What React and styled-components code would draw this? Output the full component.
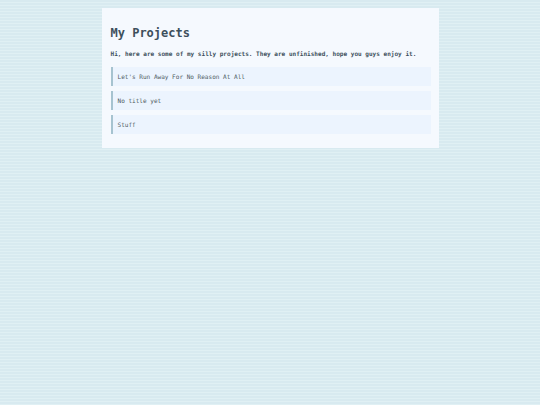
import React from 'react';
import styled, { createGlobalStyle } from 'styled-components';

const GlobalStyle = createGlobalStyle`
  html, body {
    margin: 0;
    padding: 0;
    min-height: 100%;
  }
  body {
    font-family: 'DejaVu Sans Mono', 'Liberation Mono', monospace;
    background-color: #daecf1;
    background-image: repeating-linear-gradient(
      to bottom,
      #d8eaf0 0px,
      #d8eaf0 2px,
      #e0f0f4 2px,
      #e0f0f4 3px
    );
    min-height: 405px;
  }
`;

const Page = styled.div`
  padding-top: 8px;
`;

const Card = styled.main`
  width: 337px;
  margin: 0 auto;
  box-sizing: border-box;
  background: #f5f9fe;
  padding: 17px 8px 14px 9px;
`;

const Title = styled.h1`
  margin: 0 0 8px;
  font-size: 12px;
  line-height: 16px;
  font-weight: bold;
  color: #3d505c;
`;

const Intro = styled.p`
  margin: 0 0 8px;
  font-size: 6.06px;
  line-height: 10px;
  font-weight: bold;
  color: #3d505c;
`;

const List = styled.ul`
  list-style: none;
  margin: 0;
  padding: 0;
  display: flex;
  flex-direction: column;
  gap: 5px;
`;

const Item = styled.li`
  height: 19px;
  display: flex;
  align-items: center;
  box-sizing: border-box;
  padding-left: 5px;
  background: #ecf4fe;
  border-left: 2px solid #a6c3d0;
  font-size: 6.06px;
  color: #505c64;
`;

const projects = ["Let's Run Away For No Reason At All", 'No title yet', 'Stuff'];

const App = () => {
  return (
    <>
      <GlobalStyle />
      <Page>
        <Card>
          <Title>My Projects</Title>
          <Intro>
            Hi, here are some of my silly projects. They are unfinished, hope you guys enjoy it.
          </Intro>
          <List>
            {projects.map((p) => (
              <Item key={p}>{p}</Item>
            ))}
          </List>
        </Card>
      </Page>
    </>
  );
};

export default App;
